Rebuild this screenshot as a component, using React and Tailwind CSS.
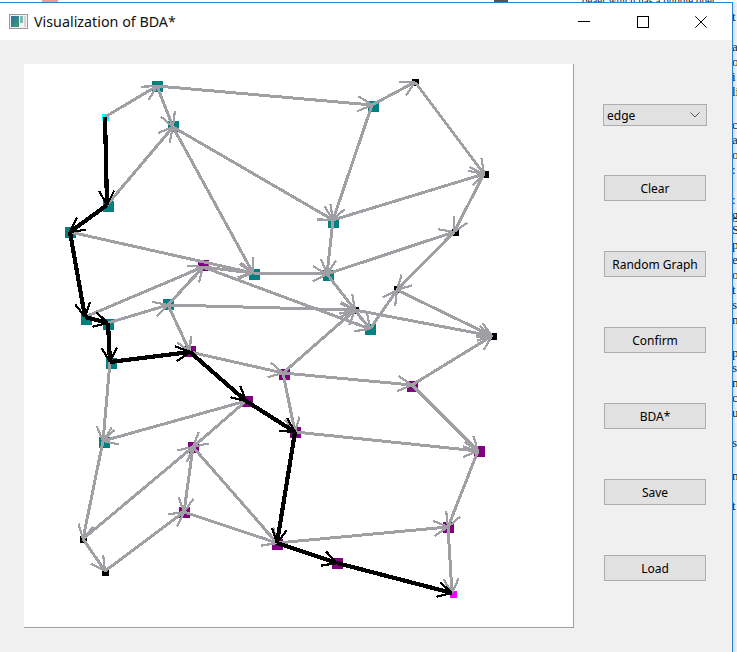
import React from "react";

const TEAL = "#008080";
const PURPLE = "#800080";
const BLACK = "#000000";

// px, py = point the edges meet at; rx, ry, s = drawn square
const nodes = {
  a: { px: 105, py: 117, rx: 102, ry: 114, s: 7, c: "#00ffff" },
  b: { px: 157, py: 86, rx: 152, ry: 81, s: 11, c: TEAL },
  c: { px: 173, py: 127, rx: 168, ry: 121, s: 11, c: TEAL },
  d: { px: 107, py: 205, rx: 103, ry: 201, s: 11, c: TEAL },
  e: { px: 70, py: 232, rx: 65, ry: 227, s: 11, c: TEAL },
  f: { px: 85, py: 317, rx: 81, ry: 314, s: 11, c: TEAL },
  g: { px: 108, py: 323, rx: 103, ry: 319, s: 11, c: TEAL },
  h: { px: 110, py: 362, rx: 106, ry: 358, s: 11, c: TEAL },
  i: { px: 168, py: 305, rx: 163, ry: 299, s: 11, c: TEAL },
  j: { px: 203, py: 267, rx: 198, ry: 260, s: 11, c: PURPLE },
  k: { px: 190, py: 352, rx: 185, ry: 346, s: 11, c: PURPLE },
  l: { px: 253, py: 273, rx: 249, ry: 269, s: 11, c: TEAL },
  m: { px: 327, py: 274, rx: 323, ry: 270, s: 11, c: TEAL },
  n: { px: 333, py: 220, rx: 328, ry: 217, s: 11, c: TEAL },
  o: { px: 372, py: 105, rx: 368, ry: 101, s: 11, c: TEAL },
  p: { px: 415, py: 82, rx: 412, ry: 79, s: 7, c: BLACK },
  q: { px: 484, py: 174, rx: 482, ry: 171, s: 7, c: BLACK },
  r: { px: 454, py: 232, rx: 452, ry: 229, s: 7, c: BLACK },
  s: { px: 397, py: 290, rx: 394, ry: 286, s: 7, c: BLACK },
  t: { px: 355, py: 310, rx: 352, ry: 307, s: 7, c: BLACK },
  u: { px: 370, py: 329, rx: 365, ry: 324, s: 11, c: TEAL },
  v: { px: 492, py: 336, rx: 490, ry: 333, s: 7, c: BLACK },
  w: { px: 283, py: 373, rx: 279, ry: 369, s: 11, c: PURPLE },
  x: { px: 412, py: 385, rx: 407, ry: 381, s: 11, c: PURPLE },
  y: { px: 246, py: 401, rx: 242, ry: 396, s: 11, c: PURPLE },
  z: { px: 295, py: 432, rx: 290, ry: 427, s: 11, c: PURPLE },
  aa: { px: 478, py: 451, rx: 474, ry: 446, s: 11, c: PURPLE },
  ab: { px: 448, py: 527, rx: 443, ry: 522, s: 11, c: PURPLE },
  ac: { px: 277, py: 543, rx: 272, ry: 539, s: 11, c: PURPLE },
  ad: { px: 337, py: 563, rx: 332, ry: 558, s: 11, c: PURPLE },
  ae: { px: 452, py: 593, rx: 450, ry: 591, s: 7, c: "#ff00ff" },
  af: { px: 103, py: 441, rx: 99, ry: 437, s: 11, c: TEAL },
  ag: { px: 193, py: 447, rx: 188, ry: 442, s: 11, c: PURPLE },
  ah: { px: 184, py: 512, rx: 179, ry: 507, s: 11, c: PURPLE },
  ai: { px: 83, py: 539, rx: 80, ry: 536, s: 7, c: BLACK },
  aj: { px: 105, py: 571, rx: 102, ry: 569, s: 7, c: BLACK },
};

const grayEdges = [
  ["a", "b"], ["b", "o"], ["b", "c"], ["d", "c"], ["c", "n"], ["c", "l"],
  ["o", "p"], ["p", "q"], ["o", "n"], ["n", "q"], ["q", "r"], ["n", "m"],
  ["l", "m"], ["m", "r"], ["m", "t"], ["r", "s"], ["u", "s"], ["s", "v"],
  ["t", "v"], ["i", "t"], ["t", "u"], ["j", "u"], ["w", "t"], ["x", "v"],
  ["w", "x"], ["x", "aa"], ["k", "w"], ["w", "z"], ["e", "l"], ["j", "l"],
  ["f", "j"], ["i", "j"], ["g", "i"], ["i", "k"], ["h", "af"], ["y", "af"],
  ["af", "ai"], ["y", "ag"], ["ai", "ag"], ["ai", "aj"], ["aj", "ah"],
  ["ag", "ah"], ["ag", "ac"], ["ah", "ac"], ["ac", "ab"], ["z", "aa"],
  ["aa", "ab"], ["ab", "ae"],
];

const pathEdges = [
  ["a", "d"], ["d", "e"], ["e", "f"], ["f", "g"], ["g", "h"], ["h", "k"],
  ["k", "y"], ["y", "z"], ["z", "ac"], ["ac", "ad"], ["ad", "ae"],
];

const buttons = ["Clear", "Random Graph", "Confirm", "BDA*", "Save", "Load"];

// what shows of the document behind the window, one list per paragraph
const behind = [
  ["t", "", "a", "o", "i", "li", ""],
  ["c", "a", "o", ":", "", ":", "ge", "S", "p", "e", "o", "t", "s", "n", ""],
  ["p", "s", "n", "c", "u", "", "s", ""],
  ["n", "", "t"],
];

const Edge = ({ from, to, color, width, barb }) => {
  const a = nodes[from];
  const b = nodes[to];
  const ang = Math.atan2(a.py - b.py, a.px - b.px);
  const len = 16;
  const spread = (28 * Math.PI) / 180;
  const tips = [ang - spread, ang + spread].map((t) => [
    b.px + Math.cos(t) * len,
    b.py + Math.sin(t) * len,
  ]);
  return (
    <g stroke={color}>
      <line x1={a.px} y1={a.py} x2={b.px} y2={b.py} strokeWidth={width} />
      {tips.map(([x, y], n) => (
        <line key={n} x1={b.px} y1={b.py} x2={x} y2={y} strokeWidth={barb} />
      ))}
    </g>
  );
};

const Graph = () => (
  <svg
    width="549"
    height="563"
    viewBox="24 64 549 563"
    shapeRendering="crispEdges"
    className="block"
  >
    {Object.entries(nodes).map(([id, n]) => (
      <rect key={id} x={n.rx} y={n.ry} width={n.s} height={n.s} fill={n.c} />
    ))}
    {grayEdges.map(([f, t]) => (
      <Edge key={f + t} from={f} to={t} color="#a0a0a4" width={3} barb={2.2} />
    ))}
    {pathEdges.map(([f, t]) => (
      <Edge key={f + t} from={f} to={t} color="#000000" width={4.2} barb={2.2} />
    ))}
  </svg>
);

const AppIcon = () => (
  <svg width="19" height="15" viewBox="0 0 19 15">
    <defs>
      <linearGradient id="ico" x1="0" y1="0" x2="1" y2="1">
        <stop offset="0" stopColor="#2f6fa8" />
        <stop offset="1" stopColor="#3f9a6a" />
      </linearGradient>
    </defs>
    <rect x="0.5" y="0.5" width="18" height="14" fill="#f4f4f4" stroke="#9a9a9a" />
    <rect x="2" y="2" width="8" height="11" fill="url(#ico)" />
    <rect x="11" y="2" width="3" height="7" fill="#7fb8b0" />
    <rect x="15" y="2" width="2" height="11" fill="#d5d5d5" />
  </svg>
);

const WindowControls = () => (
  <div className="flex items-center mr-[2px]">
    <div className="w-[58px] flex justify-center">
      <svg width="12" height="12" viewBox="0 0 12 12" shapeRendering="crispEdges">
        <line x1="0" y1="5.5" x2="12" y2="5.5" stroke="#000" />
      </svg>
    </div>
    <div className="w-[59px] flex justify-center">
      <svg width="12" height="12" viewBox="0 0 12 12" shapeRendering="crispEdges">
        <rect x="0.5" y="0.5" width="11" height="11" fill="none" stroke="#000" />
      </svg>
    </div>
    <div className="w-[58px] flex justify-center">
      <svg width="12" height="12" viewBox="0 0 12 12">
        <path d="M0.3 0.3L11.7 11.7M11.7 0.3L0.3 11.7" stroke="#000" fill="none" />
      </svg>
    </div>
  </div>
);

const App = () => {
  return (
    <div className="w-[737px] h-[652px] overflow-hidden flex flex-col bg-white font-['Noto_Sans',sans-serif]">
      <div className="h-[2px] overflow-hidden flex text-[11px] leading-[6px] whitespace-nowrap text-[#222] font-['Liberation_Serif',serif]">
        <div className="ml-[42px] w-[16px] h-[2px] bg-[#e8a090]" />
        <div className="ml-[436px] w-[14px] h-[2px] bg-[#555555]" />
        <div className="ml-[74px] -mt-[3px]">oeaer which has a bubble oper</div>
      </div>
      <div className="flex flex-1 min-h-0">
        <div className="w-[733px] shrink-0 flex flex-col border-t border-r border-[#2b82d0]">
          <div className="h-[37px] bg-white flex items-center justify-between">
            <div className="flex items-center pl-[9px] gap-[6px]">
              <AppIcon />
              <span className="text-[14.3px] text-[#111]">Visualization of BDA*</span>
            </div>
            <WindowControls />
          </div>
          <div className="flex-1 bg-[#f0f0f0] flex pl-6 pt-6">
            <div className="w-[550px] h-[564px] bg-white border-r border-b border-[#a0a0a0]">
              <Graph />
            </div>
            <div className="ml-[29px] pt-[40px] flex flex-col text-[12px] text-black">
              <div className="w-[104px] h-[22px] bg-[#e1e1e1] border border-[#adadad] flex items-center justify-between pl-[3px] pr-[6px]">
                <span className="pt-[2px]">edge</span>
                <svg width="10" height="6" viewBox="0 0 10 6">
                  <path d="M0.5 0.5L5 5L9.5 0.5" fill="none" stroke="#555" />
                </svg>
              </div>
              <div className="mt-[49px] ml-px flex flex-col gap-[50px]">
                {buttons.map((b) => (
                  <button
                    key={b}
                    className="w-[102px] h-[26px] pt-[2px] bg-[#e1e1e1] border border-[#adadad] flex items-center justify-center"
                  >
                    {b}
                  </button>
                ))}
              </div>
            </div>
          </div>
        </div>
        <div className="flex-1 overflow-hidden bg-gradient-to-r from-[#dcdcdc] to-[#f4f4f4] pt-[7px] text-[13px] leading-[15px] whitespace-nowrap text-[#222] font-['Liberation_Serif',serif] flex flex-col gap-[3px]">
          {behind.map((para, i) => (
            <div key={i}>
              {para.map((t, n) => (
                <div key={n} className="h-[15px] -ml-px">
                  {t}
                </div>
              ))}
            </div>
          ))}
        </div>
      </div>
    </div>
  );
};

export default App;
